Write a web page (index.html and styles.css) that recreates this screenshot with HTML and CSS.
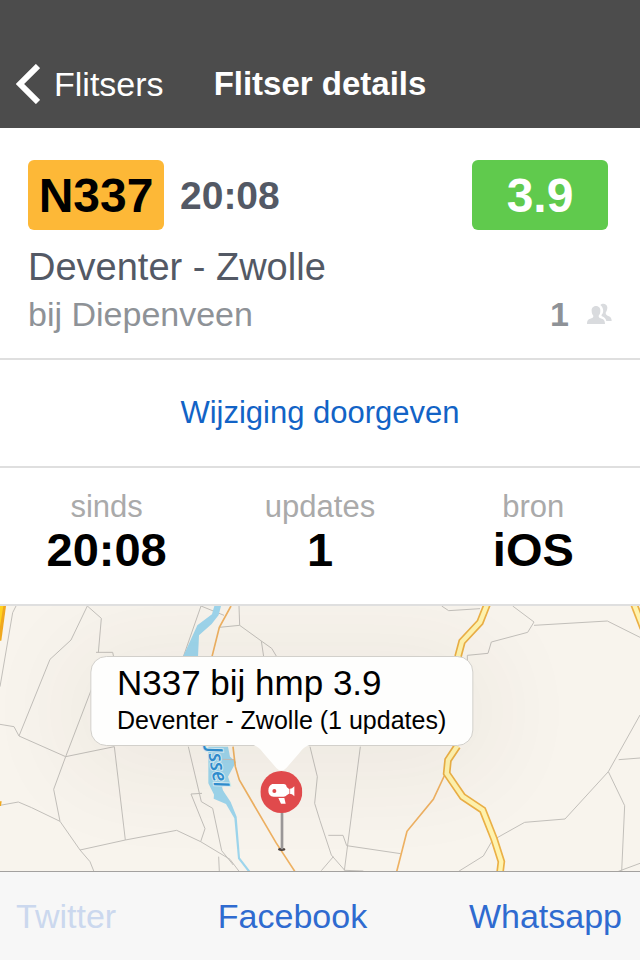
FILE: index.html
```
<!DOCTYPE html>
<html lang="nl">
<head>
    <meta charset="UTF-8">
    <meta name="viewport" content="width=device-width, initial-scale=1.0">
    <title>Flitser details</title>
    <link rel="stylesheet" href="styles.css">
</head>
<body>

<header class="navbar">
    <a class="back" href="#">
        <svg width="24" height="40" viewBox="0 0 24 40" aria-hidden="true">
            <path d="M22 2 L4 20 L22 38" fill="none" stroke="#fff" stroke-width="6"/>
        </svg>
        Flitsers
    </a>
    <h1>Flitser details</h1>
</header>

<main>
    <section class="summary">
        <div class="badges">
            <span class="badge road">N337</span>
            <span class="time">20:08</span>
            <span class="badge hmp">3.9</span>
        </div>
        <h2>Deventer - Zwolle</h2>
        <div class="place">
            <span>bij Diepenveen</span>
            <span class="count">
                <b>1</b>
                <svg width="25" height="22" viewBox="0 0 75 66" fill="#d9dbde" aria-hidden="true">
                    <path d="M40 6 C46 -1 60 1 61 13 C61 20 59 25 56 29 C56 34 59 37 64 39 C71 42 74 46 74 54 L58 54 C56 47 52 43 45 40 C43 39 43 36 45 34 C50 28 51 15 40 6 Z"/>
                    <path d="M27 9 C36 9 41 16 40 24 C40 30 38 35 35 38 C35 42 36 44 41 46 C50 49 54 52 54 63 L0 63 C0 52 4 49 13 46 C18 44 19 42 19 38 C16 35 14 30 14 24 C13 16 18 9 27 9 Z"/>
                </svg>
            </span>
        </div>
    </section>

    <section class="change">
        <button type="button">Wijziging doorgeven</button>
    </section>

    <dl class="stats">
        <div><dt>sinds</dt><dd>20:08</dd></div>
        <div><dt>updates</dt><dd>1</dd></div>
        <div><dt>bron</dt><dd>iOS</dd></div>
    </dl>

    <section class="map">
        <svg class="map-tiles" viewBox="0 18 1920 795" preserveAspectRatio="xMidYMin slice" aria-hidden="true">
            <!-- local roads -->
            <g class="lane">
                <path d="M48 18 L38 38 L0 260"/>
                <path d="M262 18 L213 120 L150 178 L57 408 L42 380 L0 373"/>
                <path d="M262 18 L304 55 L295 158 M288 157 L338 157 L343 180"/>
                <path d="M57 408 L197 470 L343 440 L376 720"/>
                <path d="M285 240 L197 470 L161 568 L180 664 L240 750 L270 785 L282 815"/>
                <path d="M0 616 L55 606 L95 623 L180 664"/>
                <path d="M240 750 L376 720 L530 691 L602 725 L690 778 L718 815"/>
                <path d="M565 440 L604 605 L638 625 L665 752 L700 795 M606 580 L573 582 L615 686 L602 725 M656 770 L658 815"/>
                <path d="M550 170 L603 18 L672 46 M658 82 L719 76 L717 18 M719 76 L784 123 L815 145 L830 170 M784 123 L791 170"/>
                <path d="M930 440 L952 530 L944 610 L960 662 L994 765 L1035 812 M964 812 L1000 770"/>
                <path d="M1081 440 L1033 812 M985 706 L1029 706 L1040 737 L1202 761 M1035 811 L1090 813"/>
                <path d="M1325 18 L1346 32 L1440 26"/>
                <path d="M1538 18 L1602 66 L1583 97 L1474 126 L1464 160 L1402 166 L1402 180"/>
                <path d="M1602 76 L1822 63 L1920 112"/>
                <path d="M1920 345 L1825 515 L1695 657 L1574 667 L1490 714 L1475 725 L1450 768 L1376 814"/>
                <path d="M1825 515 L1874 617 L1865 814 M1856 479 L1920 474 M1855 814 L1920 790"/>
            </g>

            <!-- river -->
            <path class="water" d="M643 18 L663 18 L656 45 L635 72 L597 106 L594 170 L549 170 L592 76 L636 43 Z"/>
            <path class="water" d="M625 440 L684 440 L690 470 L708 486 L684 530 L690 548 L666 560 L674 590 L646 592 L625 550 Z"/>
            <path class="water" d="M644 560 L668 570 L692 606 L710 650 L720 773 L752 815 L744 815 L714 776 L703 655 L678 612 L641 596 Z"/>
            <g class="lane">
                <path d="M668 478 L705 479"/>
            </g>

            <!-- provincial roads -->
            <path class="minor" d="M693 18 L658 82 L636 170"/>
            <path class="minor" d="M699 440 L706 500 L718 540 L828 728 L885 815"/>
            <path class="minor" d="M1334 525 L1300 598 L1221 694 L1190 815"/>
            <g class="major-edge">
                <path d="M1461 14 L1440 67 L1386 125 L1374 170 M1372 438 L1344 480 L1340 520 L1388 590 L1448 630 L1482 716 L1504 785 L1500 818"/>
                <path d="M1901 10 L1930 85"/>
            </g>
            <g class="major">
                <path d="M1461 14 L1440 67 L1386 125 L1374 170 M1372 438 L1344 480 L1340 520 L1388 590 L1448 630 L1482 716 L1504 785 L1500 818"/>
                <path d="M1901 10 L1930 85"/>
            </g>
            <path d="M0 18 L18 18 L4 122 L0 122 Z" fill="#f0a81e"/>
            <path d="M0 18 L10 18 L0 80 Z" fill="#ffd21f"/>
            <path d="M0 604 L5 604 L3 618 L0 618 Z" fill="#f0a81e"/>

            <text class="river-name" transform="translate(619 426) rotate(80)">IJssel</text>
        </svg>

        <div class="marker">
            <div class="callout">
                <strong>N337 bij hmp 3.9</strong>
                <span>Deventer - Zwolle (1 updates)</span>
            </div>
            <svg class="tail" width="56" height="27" viewBox="0 0 56 27" aria-hidden="true">
                <path d="M0 0 L56 0 Q50 2 46 8 L33 23 Q28 28 23 23 L10 8 Q6 2 0 0 Z" fill="#fefefd"/>
            </svg>
            <svg class="pin" width="42" height="81" viewBox="0 0 126 243" aria-hidden="true">
                <ellipse cx="64" cy="235" rx="11" ry="5" fill="#4a3f3b"/>
                <path d="M65 120 V235" stroke="#9a9797" stroke-width="8"/>
                <circle cx="63" cy="63" r="63" fill="#e04a4c"/>
                <path d="M36 39 L70 39 Q78 39 79 48 L86 54 L95 52 L102 46 L102 76 L95 70 L86 68 L79 73 Q76 77 70 77 L40 77 Q24 75 24 59 Q24 44 36 39 Z" fill="#fff"/>
                <path d="M54 81 L72 81 L76 98 L62 98 Z" fill="#fff"/>
                <circle cx="42" cy="60" r="6" fill="#e04a4c"/>
                <path d="M88 52 V70" stroke="#e04a4c" stroke-width="2"/>
            </svg>
        </div>
    </section>
</main>

<footer class="toolbar">
    <button type="button" disabled>Twitter</button>
    <button type="button">Facebook</button>
    <button type="button">Whatsapp</button>
</footer>

</body>
</html>
```
FILE: styles.css
```
* {
    box-sizing: border-box;
}
body {
    margin: 0;
    min-height: 100vh;
    display: flex;
    flex-direction: column;
    font-family: "Liberation Sans", Arial, sans-serif;
    font-size: 34px;
    line-height: 40px;
    background: #fff;
    color: #000;
}
h1, h2, dl, dd {
    margin: 0;
}
button {
    padding: 0;
    border: none;
    background: none;
    font: inherit;
    cursor: pointer;
}
main {
    flex: 1;
    display: flex;
    flex-direction: column;
}

/* top bar */
.navbar {
    display: grid;
    grid-template-columns: 1fr auto 1fr;
    padding: 64px 16px 24px;
    background: #4c4c4c;
    color: #fff;
}
.navbar h1 {
    font-size: 33px;
}
.back {
    display: flex;
    gap: 14px;
    color: inherit;
    text-decoration: none;
}

/* location */
.summary {
    padding: 32px 28px 24px;
    border-bottom: 2px solid #dfdfdf;
}
.badges {
    display: flex;
    align-items: center;
    gap: 16px;
    padding-right: 4px;
}
.badge {
    width: 136px;
    height: 70px;
    border-radius: 6px;
    font-size: 48px;
    font-weight: bold;
    line-height: 72px;
    text-align: center;
}
.road {
    background: #fdb837;
}
.hmp {
    margin-left: auto;
    background: #60ca4d;
    color: #fff;
}
.time {
    padding-top: 2px;
    font-size: 39px;
    font-weight: bold;
    color: #535965;
}
.summary h2 {
    margin: 15px 0 5px;
    font-size: 38px;
    font-weight: normal;
    line-height: 44px;
    color: #535965;
}
.place {
    display: flex;
    justify-content: space-between;
    color: #8e9297;
}
.count {
    display: flex;
    align-items: center;
    gap: 18px;
}

.change {
    padding: 33px 28px;
    border-bottom: 2px solid #dfdfdf;
    text-align: center;
}
.change button {
    display: block;
    margin: 0 auto;
    font-size: 31px;
    color: #1263c6;
}

.stats {
    display: grid;
    grid-template-columns: repeat(3, 1fr);
    padding: 21px 0 29px;
    border-bottom: 2px solid #dfdfdf;
    text-align: center;
}
.stats dt {
    font-size: 31px;
    line-height: 36px;
    color: #aaa;
}
.stats dd {
    font-size: 47px;
    font-weight: bold;
    line-height: 50px;
}

/* map */
.map {
    position: relative;
    flex: 1;
    min-height: 260px;
    overflow: hidden;
    background: #f8f4ed;
}
.map-tiles {
    position: absolute;
    inset: 0;
    width: 100%;
    height: 100%;
}
.lane path {
    fill: none;
    stroke: #c2bfba;
    stroke-width: 3;
}
.water {
    fill: #9dd5ec;
}
.minor {
    fill: none;
    stroke: #eeb162;
    stroke-width: 5;
}
.major-edge path {
    fill: none;
    stroke: #ebb046;
    stroke-width: 23;
}
.major path {
    fill: none;
    stroke: #fff3ae;
    stroke-width: 13;
}
.river-name {
    font-family: "Open Sans", sans-serif;
    font-size: 61px;
    font-style: italic;
    font-weight: 600;
    fill: #2f8fd2;
    stroke: #d5edf7;
    stroke-width: 6;
    paint-order: stroke;
}
.marker {
    position: absolute;
    top: 50px;
    left: 44%;
    display: flex;
    flex-direction: column;
    align-items: center;
    transform: translateX(-50%);
}
.callout {
    padding: 6px 26px 8px;
    border: 1px solid #d2d0cb;
    border-radius: 16px;
    background: #fefefd;
    box-shadow: 0 10px 100px 20px rgba(60, 50, 40, 0.06);
    white-space: nowrap;
}
.callout strong,
.callout span {
    display: block;
}
.callout strong {
    font-size: 35px;
    font-weight: normal;
}
.callout span {
    font-size: 25px;
    line-height: 34px;
}
.tail {
    position: relative;
    margin: -1px 0;
}
.pin {
    position: relative;
}

/* share bar */
.toolbar {
    display: flex;
    justify-content: space-between;
    padding: 24px 18px 24px 16px;
    border-top: 1px solid #a3a19f;
    background: #f7f7f7;
}
.toolbar button {
    color: #2f6bd0;
}
.toolbar button:disabled {
    color: #cbd8ee;
    cursor: default;
}
```
